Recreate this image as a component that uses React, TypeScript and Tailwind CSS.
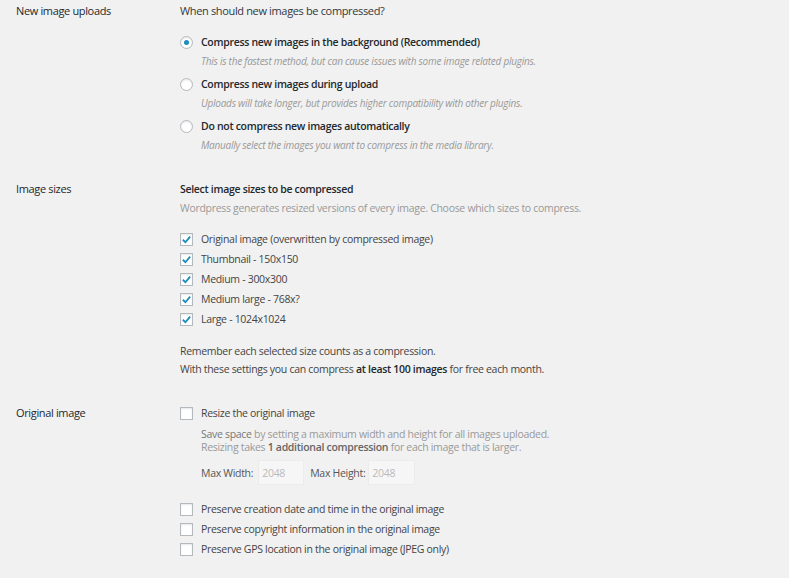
import React from 'react';

const font = { fontFamily: '"Open Sans", "Noto Sans", sans-serif' };

const Radio = ({ checked }: { checked?: boolean }) => (
  <span className="w-[13px] h-[13px] rounded-full bg-white border border-[#b4b9be] shadow-[inset_0_1px_2px_rgba(0,0,0,0.1)] flex items-center justify-center shrink-0">
    {checked && <span className="w-[5px] h-[5px] rounded-full bg-[#1e8cbe]" />}
  </span>
);

const Check = ({ checked }: { checked?: boolean }) => (
  <span className="w-[13px] h-[13px] bg-white border border-[#b4b9be] shadow-[inset_0_1px_2px_rgba(0,0,0,0.1)] flex items-center justify-center shrink-0">
    {checked && (
      <svg viewBox="0 0 12 12" className="w-[11px] h-[11px]">
        <path d="M2 6.3 L4.8 9 L10 2.8" fill="none" stroke="#1e8cbe" strokeWidth="2" />
      </svg>
    )}
  </span>
);

const RadioOption = ({ checked, title, desc }: { checked?: boolean; title: string; desc: string }) => (
  <div>
    <div className="flex items-center gap-2 h-5 font-semibold text-[#23282d]">
      <Radio checked={checked} />
      <span>{title}</span>
    </div>
    <p className="pl-[21px] italic text-[10px] tracking-[-0.25px] leading-[18px] text-[#999]">{desc}</p>
  </div>
);

const CheckRow = ({ checked, label }: { checked?: boolean; label: string }) => (
  <div className="flex items-center gap-2 h-5 text-[#444]">
    <Check checked={checked} />
    <span>{label}</span>
  </div>
);

export default function App() {
  return (
    <div style={font} className="min-h-screen bg-[#f1f1f1] pl-4 pt-[1px] text-[10.5px] tracking-[-0.3px] leading-5 text-[#23282d]">
      <div className="grid grid-cols-[164px_1fr]">
        <div className="text-[11px] tracking-[-0.35px]">New image uploads</div>
        <div>
          <div className="text-[11px] tracking-[-0.35px] text-[#32373c]">When should new images be compressed?</div>
          <div className="mt-[11px] flex flex-col gap-1">
            <RadioOption checked title="Compress new images in the background (Recommended)" desc="This is the fastest method, but can cause issues with some image related plugins." />
            <RadioOption title="Compress new images during upload" desc="Uploads will take longer, but provides higher compatibility with other plugins." />
            <RadioOption title="Do not compress new images automatically" desc="Manually select the images you want to compress in the media library." />
          </div>
        </div>
      </div>

      <div className="grid grid-cols-[164px_1fr] mt-[25px]">
        <div className="text-[11px] tracking-[-0.35px]">Image sizes</div>
        <div>
          <div className="font-semibold text-[#23282d]">Select image sizes to be compressed</div>
          <p className="text-[#999] leading-[18px]">Wordpress generates resized versions of every image. Choose which sizes to compress.</p>
          <div className="mt-[12px]">
            <CheckRow checked label="Original image (overwritten by compressed image)" />
            <CheckRow checked label="Thumbnail - 150x150" />
            <CheckRow checked label="Medium - 300x300" />
            <CheckRow checked label="Medium large - 768x?" />
            <CheckRow checked label="Large - 1024x1024" />
          </div>
          <p className="mt-[13px] text-[#444] leading-[18px]">Remember each selected size counts as a compression.</p>
          <p className="text-[#444] leading-[18px]">
            With these settings you can compress <span className="font-semibold text-[#23282d]">at least 100 images</span> for free each month.
          </p>
        </div>
      </div>

      <div className="grid grid-cols-[164px_1fr] mt-[25px]">
        <div className="text-[11px] tracking-[-0.35px]">Original image</div>
        <div>
          <CheckRow label="Resize the original image" />
          <div className="pl-[21px] mt-[5px] text-[#999] leading-[13px]">
            <p><span className="text-[#777]">Save space</span> by setting a maximum width and height for all images uploaded.</p>
            <p>Resizing takes <span className="font-semibold text-[#666]">1 additional compression</span> for each image that is larger.</p>
          </div>
          <div className="pl-[21px] mt-[6px] flex items-center h-[25px] text-[#555]">
            <span>Max Width:</span>
            <span className="ml-[5px] w-[46px] h-[25px] bg-[#f6f6f6] border border-[#ececec] text-[#bbb] px-[3px] flex items-center">2048</span>
            <span className="ml-[6px]">Max Height:</span>
            <span className="ml-[3px] w-[47px] h-[25px] bg-[#f6f6f6] border border-[#ececec] text-[#bbb] px-[3px] flex items-center">2048</span>
          </div>
          <div className="mt-[14px]">
            <CheckRow label="Preserve creation date and time in the original image" />
            <CheckRow label="Preserve copyright information in the original image" />
            <CheckRow label="Preserve GPS location in the original image (JPEG only)" />
          </div>
        </div>
      </div>
    </div>
  );
}
